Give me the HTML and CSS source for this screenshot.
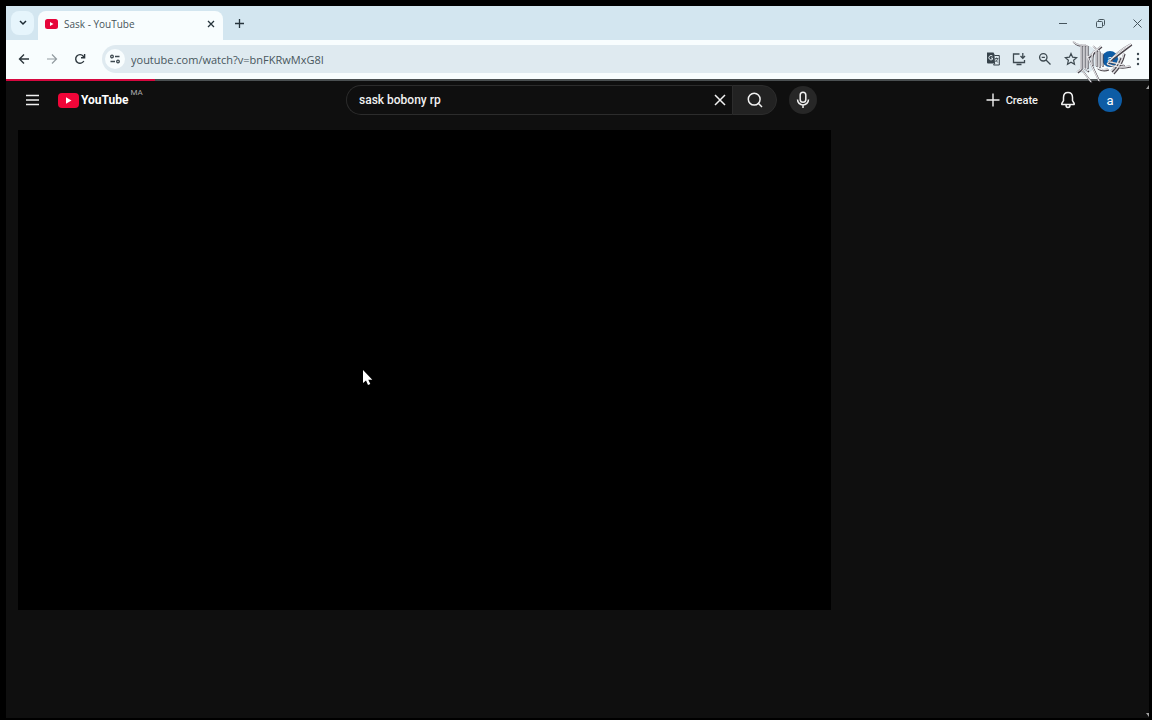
FILE: index.html
```html
<!DOCTYPE html>
<html lang="en">
<head>
  <meta charset="UTF-8" />
  <title>Sask - YouTube</title>
  <link rel="stylesheet" href="styles.css">
</head>
<body>

<div class="window">

  <!-- Tab strip -->
  <div class="tab-strip">
    <button class="tab-search" aria-label="Search tabs">
      <svg width="8" height="6" viewBox="0 0 8 6"><path d="M1 1l3 3 3-3" fill="none" stroke="#1d2b33" stroke-width="1.5"/></svg>
    </button>
    <div class="tab">
      <svg width="13" height="10" viewBox="0 0 13 10"><rect width="13" height="10" rx="2.5" fill="#e6053a"/><path d="M5 3v4l3.500-2z" fill="#fff"/></svg>
      <span class="tab-title">Sask - YouTube</span>
      <button class="plain" aria-label="Close tab">
        <svg width="8" height="8" viewBox="0 0 8 8"><path d="M1 1l6 6M7 1L1 7" stroke="#26343c" stroke-width="1.300"/></svg>
      </button>
    </div>
    <button class="plain new-tab" aria-label="New tab">
      <svg width="9" height="9" viewBox="0 0 9 9"><path d="M4.500 0v9M0 4.500h9" stroke="#26343c" stroke-width="1.300"/></svg>
    </button>
    <div class="window-controls">
      <button class="plain" aria-label="Minimize"><svg width="9" height="9" viewBox="0 0 9 9"><path d="M0 4.500h8" stroke="#46555d"/></svg></button>
      <button class="plain" aria-label="Restore"><svg width="9" height="9" viewBox="0 0 9 9"><path d="M2.500 2V1.500q0-1 1-1h4q1 0 1 1v4q0 1-1 1H7" fill="none" stroke="#46555d"/><rect x=".5" y="2.500" width="6" height="6" rx="1" fill="none" stroke="#46555d"/></svg></button>
      <button class="plain" aria-label="Close"><svg width="9" height="9" viewBox="0 0 9 9"><path d="M.5.5l8 8M8.500.5l-8 8" stroke="#46555d"/></svg></button>
    </div>
  </div>

  <!-- Toolbar -->
  <div class="toolbar">
    <button class="plain" aria-label="Back"><svg width="12" height="12" viewBox="0 0 12 12"><path d="M11 6H2M6 1.500L1.500 6 6 10.500" fill="none" stroke="#2c363c" stroke-width="1.400"/></svg></button>
    <button class="plain" aria-label="Forward"><svg width="12" height="12" viewBox="0 0 12 12"><path d="M1 6h9M6 1.500L10.500 6 6 10.500" fill="none" stroke="#929ba0" stroke-width="1.200"/></svg></button>
    <button class="plain" aria-label="Reload"><svg width="12" height="12" viewBox="0 0 12 12"><path d="M9.800 8A4.300 4.300 0 1 1 9.300 3.200L10.500 4.500M10.600 1v3.700H7" fill="none" stroke="#2c363c" stroke-width="1.400"/></svg></button>
    <div class="omnibox">
      <button class="site-info" aria-label="Site information">
        <svg width="10" height="10" viewBox="0 0 10 10"><g fill="none" stroke="#3c484f" stroke-width="1.300"><circle cx="2" cy="2.500" r="1.300"/><path d="M5 2.500h4.500M.5 7.500H5"/><circle cx="8" cy="7.500" r="1.300"/></g></svg>
      </button>
      <input class="url" type="text" aria-label="Address" value="youtube.com/watch?v=bnFKRwMxG8I">
      <button class="plain" aria-label="Translate">
        <svg width="14" height="14" viewBox="0 0 14 14"><path d="M1 .5h6.500l1.500 3v8H2q-1 0-1-1z" fill="#36424a"/><path d="M6.500 4A2.200 2.200 0 1 0 6.500 7.400V6H5" fill="none" stroke="#dfeaf0"/><path d="M8.500 3.500H13.300v9.500H7.500l1.500-2" fill="#dfeaf0" stroke="#36424a"/><path d="M9 6.500H12.300M10.600 5.500v1M11.800 6.500q-.5 2-2.500 3.500M9.300 7.500l2.500 3" fill="none" stroke="#36424a" stroke-width=".8"/></svg>
      </button>
      <button class="plain" aria-label="Install app">
        <svg width="14" height="14" viewBox="0 0 14 14"><path d="M7.500 2H1.500v8.500h11V8M4.500 12.500h5M10.800 1v5M8.500 4l2.300 2.300L13 4" fill="none" stroke="#3d4950" stroke-width="1.300"/></svg>
      </button>
      <button class="plain" aria-label="Zoom">
        <svg width="14" height="14" viewBox="0 0 14 14"><path d="M8 8l4.500 4.500M3.700 5.300h3.200" stroke="#3d4950" stroke-width="1.300"/><circle cx="5.300" cy="5.300" r="3.700" fill="none" stroke="#3d4950" stroke-width="1.300"/></svg>
      </button>
      <button class="plain" aria-label="Bookmark this tab">
        <svg width="14" height="14" viewBox="0 0 14 14"><path d="M7 1.500l1.600 3.700 4 .4-3 2.700.9 4L7 10.200l-3.500 2.100.9-4-3-2.700 4-.4z" fill="none" stroke="#3d4950" stroke-width="1.200"/></svg>
      </button>
    </div>
    <button class="profile" aria-label="Profile">a</button>
    <button class="plain menu" aria-label="Menu"><svg width="4" height="14" viewBox="0 0 4 14" fill="#3d4950"><circle cx="2" cy="2" r="1.200"/><circle cx="2" cy="7" r="1.200"/><circle cx="2" cy="12" r="1.200"/></svg></button>
    <!-- Emblem -->
    <svg class="emblem" width="64" height="46" viewBox="0 0 64 46">
      <defs>
        <g id="strokes" fill="none">
          <path d="M3 3.500q4 4.500 13 3.500M11 8v23l-4 3M14 8v22l4 3M17 7v23M18 19L31 8M17 18l12 25M12 32l9 12"/>
          <path d="M23 8l6 5v16M26 12v16M32 15v13M27 30q5 3 11 1M24 13q-3 4-2 14"/>
          <path d="M61 6Q47 13 37 26M61 6L40 22M54 15q-3 12-11 20M50 19q-3 9-9 14M37 26q12 5 23 2M40 24l14 3"/>
        </g>
      </defs>
      <use href="#strokes" x="1" y="1" stroke="#4a444b" stroke-width="1.200"/>
      <use href="#strokes" stroke="#8e8c92" stroke-width="1.400"/>
      <use href="#strokes" stroke="#f6f6f8" stroke-width=".9"/>
    </svg>
  </div>

  <div class="load-track"><div class="load-bar" style="width: 13%"></div></div>

  <div class="page">
    <div class="content">

      <!-- Masthead -->
      <header class="masthead">
        <div class="start">
          <button class="plain guide" aria-label="Guide"><svg width="14" height="12" viewBox="0 0 14 12"><path d="M0 1.500h13M0 6h13M0 10.500h13" stroke="#f1f1f1" stroke-width="1.500"/></svg></button>
          <a class="logo" href="#">
            <svg width="21" height="15" viewBox="0 0 21 15"><rect width="21" height="15" rx="4" fill="#f00538"/><path d="M8 4.300v6.400l5.500-3.200z" fill="#fff"/></svg>
            <span class="logo-name">YouTube</span>
            <span class="country">MA</span>
          </a>
        </div>
        <form class="search">
          <div class="search-box">
            <input class="query" type="text" aria-label="Search" value="sask bobony rp">
            <button class="plain" type="button" aria-label="Clear search"><svg width="12" height="12" viewBox="0 0 12 12"><path d="M1 1l10 10M11 1L1 11" stroke="#f1f1f1" stroke-width="1.500"/></svg></button>
          </div>
          <button class="search-button" type="button" aria-label="Search"><svg width="16" height="16" viewBox="0 0 16 16"><circle cx="7.200" cy="7.200" r="5.900" fill="none" stroke="#f1f1f1" stroke-width="1.500"/><path d="M11.300 11.300l3.700 3.700" stroke="#f1f1f1" stroke-width="1.500"/></svg></button>
          <button class="mic" type="button" aria-label="Search with your voice"><svg width="14" height="18" viewBox="0 0 14 18"><g fill="none" stroke="#f1f1f1" stroke-width="1.500"><rect x="4.200" y="1.200" width="5.600" height="10" rx="2.800"/><path d="M1.500 8.500a5.500 5.500 0 0 0 11 0M7 14v3"/></g></svg></button>
        </form>
        <div class="end">
          <button class="plain create">
            <svg width="14" height="14" viewBox="0 0 14 14"><path d="M7 .5v13M.5 7h13" stroke="#f1f1f1" stroke-width="1.400"/></svg>
            Create
          </button>
          <button class="plain" aria-label="Notifications"><svg width="16" height="18" viewBox="0 0 16 18"><path d="M8 1.500C5 1.500 3.500 3.800 3.500 6.500v3.200L1.800 12.500v1h12.400v-1l-1.700-2.800V6.500C12.500 3.800 11 1.500 8 1.500zM6 14q0 2.500 2 2.500t2-2.500" fill="none" stroke="#f1f1f1" stroke-width="1.500" stroke-linejoin="round"/></svg></button>
          <button class="avatar" aria-label="Account">a</button>
        </div>
      </header>

      <!-- Watch area -->
      <main class="watch">
        <div class="player">
          <svg class="cursor" width="10" height="16" viewBox="0 0 10 16"><path d="M0 0v13l3-2.500L5 15l2.300-1-2-4.300H9.300z" fill="#fff"/></svg>
        </div>
      </main>
    </div>

    <div class="scrollbar">
      <svg width="4" height="4" viewBox="0 0 4 4"><path d="M4 0v4H1z" fill="#a0a0a0"/></svg>
      <svg width="4" height="4" viewBox="0 0 4 4"><path d="M4 4V0H1z" fill="#a0a0a0"/></svg>
    </div>
  </div>

</div>

</body>
</html>
```

FILE: styles.css
```css
* {
  box-sizing: border-box;
}

body {
  margin: 0;
  background: #000;
  font-family: Roboto, sans-serif;
  color: #f1f1f1;
}

svg {
  display: block;
  flex: none;
}

button, input {
  font: inherit;
  color: inherit;
  border: none;
  padding: 0;
  background: none;
}

button {
  display: flex;
  align-items: center;
  justify-content: center;
  flex: none;
  cursor: pointer;
}

input {
  flex: 1;
  min-width: 0;
  outline: none;
}

.window {
  display: flex;
  flex-direction: column;
  min-height: 100vh;
  padding: 6px 3px 2px 6px;
}

/* Tab strip */
.tab-strip {
  display: flex;
  align-items: center;
  height: 34px;
  padding: 0 7px 0 5px;
  background: #d3e6f0;
}

.tab-search {
  width: 23px;
  height: 24px;
  border-radius: 8px;
  background: #e6f5fc;
}

.tab {
  display: flex;
  align-items: center;
  align-self: flex-end;
  gap: 6px;
  width: 185px;
  height: 29px;
  margin-left: 4px;
  padding: 0 8px 4px 7px;
  border-radius: 8px 8px 0 0;
  background: #f8fdfe;
}

.tab-title {
  flex: 1;
  font-family: "Open Sans", sans-serif;
  font-size: 10px;
  color: #47545b;
}

.new-tab {
  margin-left: 12px;
}

.window-controls {
  display: flex;
  gap: 28px;
  margin-left: auto;
}

/* Toolbar */
.toolbar {
  position: relative;
  display: flex;
  align-items: center;
  gap: 16px;
  height: 39px;
  padding: 0 9px 1px 12px;
  background: #f8fdfe;
}

.omnibox {
  display: flex;
  align-items: center;
  flex: 1;
  gap: 12px;
  height: 28px;
  margin-right: 5px;
  padding: 0 20px 0 3px;
  border-radius: 14px;
  background: #dfeaf0;
}

.site-info {
  width: 20px;
  height: 20px;
  border-radius: 50%;
  background: #f8fdfe;
}

.url {
  margin-left: -6px;
  font-family: "Open Sans", sans-serif;
  font-size: 11px;
  color: #48565d;
}

.profile, .avatar {
  border-radius: 50%;
  background: #0d5ca5;
  color: #fff;
}

.profile {
  width: 16px;
  height: 16px;
  margin-left: -17px;
  font-size: 10px;
}

.menu {
  margin-left: 2px;
}

.emblem {
  position: absolute;
  right: 15px;
  top: -2px;
  z-index: 1;
}

.load-track {
  height: 2px;
  background: #4b5052;
}

.load-bar {
  height: 100%;
  background: #d6083f;
}

/* Page */
.page {
  display: flex;
  flex: 1;
  background: #0f0f0f;
}

.content {
  flex: 1;
}

.scrollbar {
  display: flex;
  flex-direction: column;
  justify-content: space-between;
  padding: 4px 0 1px;
}

/* Masthead */
.masthead {
  display: grid;
  grid-template-columns: 1fr auto 1fr;
  align-items: center;
  height: 38px;
  padding: 0 8px 0 20px;
}

.start, .end, .logo, .search {
  display: flex;
  align-items: center;
}

.logo {
  gap: 2px;
  margin-left: 18px;
  color: #fff;
  text-decoration: none;
}

.logo-name {
  font-family: "Liberation Sans Narrow", Roboto, sans-serif;
  font-size: 12px;
  font-weight: 700;
}

.country {
  align-self: flex-start;
  font-size: 8px;
  line-height: 8px;
  margin-top: -4px;
  color: #aaa;
}

.search-box {
  display: flex;
  align-items: center;
  width: 386px;
  height: 30px;
  padding: 0 6px 0 12px;
  border: 1px solid #2c2c2c;
  border-right: none;
  border-radius: 15px 0 0 15px;
}

.query {
  font-size: 12px;
  font-weight: 500;
}

.search-button {
  width: 45px;
  height: 30px;
  border: 1px solid #2c2c2c;
  border-radius: 0 15px 15px 0;
  background: #222;
}

.mic {
  width: 28px;
  height: 28px;
  margin-left: 12px;
  border-radius: 50%;
  background: #272727;
}

.end {
  justify-content: flex-end;
  gap: 22px;
  padding-right: 15px;
}

.create {
  gap: 6px;
  font-size: 11px;
  font-weight: 500;
}

.avatar {
  width: 24px;
  height: 24px;
  font-size: 13px;
}

/* Watch area */
.watch {
  display: grid;
  grid-template-columns: minmax(0, 1fr) 314px;
  padding: 11px 0 0 12px;
}

.player {
  position: relative;
  aspect-ratio: 813 / 480;
  background: #000;
}

.cursor {
  position: absolute;
  left: 345px;
  top: 240px;
}
```
